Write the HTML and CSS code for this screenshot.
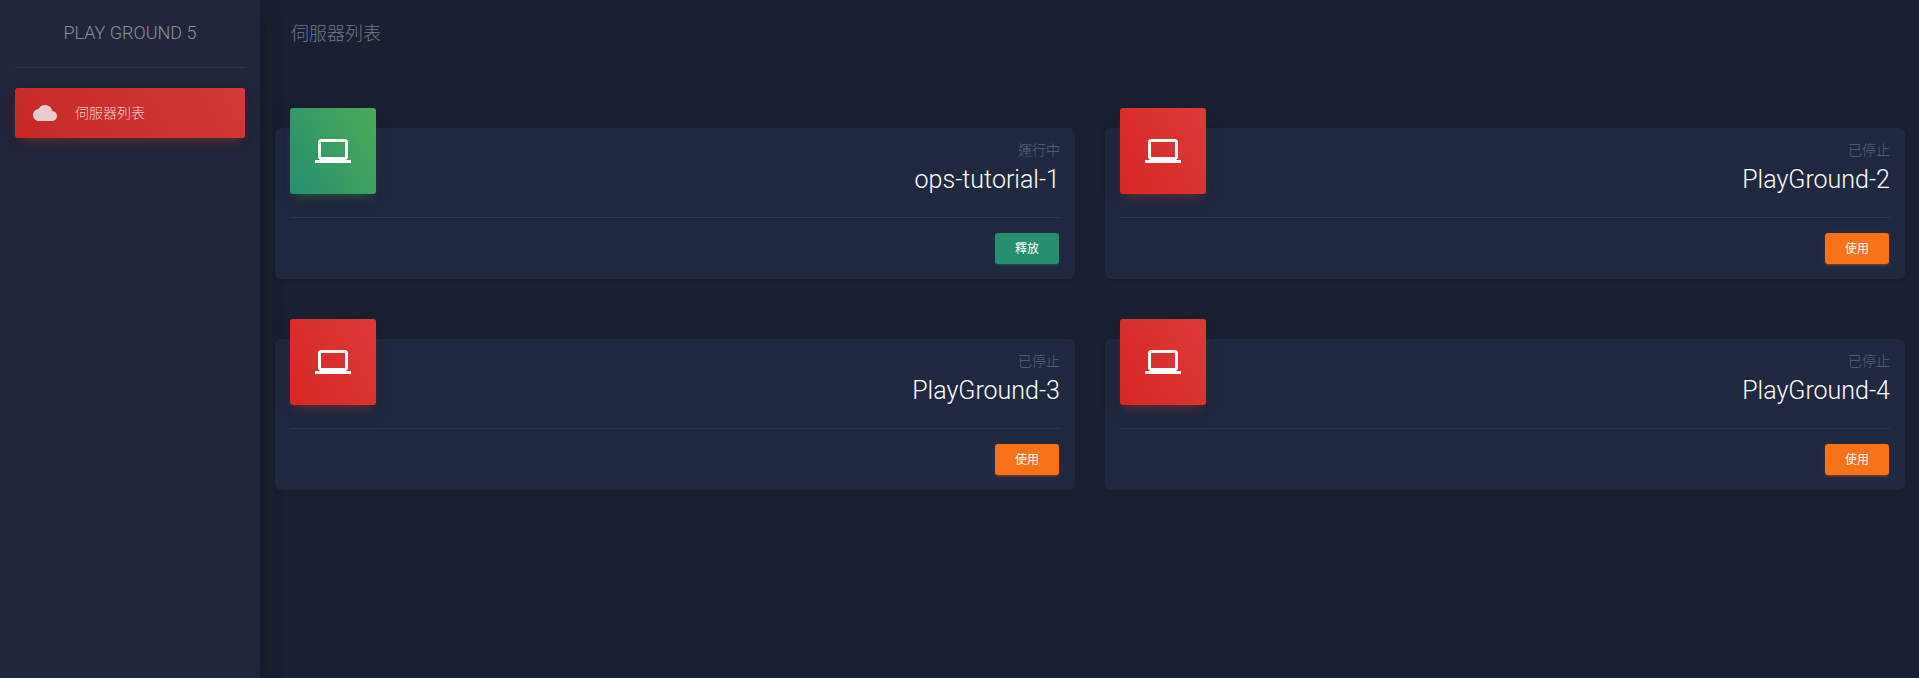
FILE: index.html
```html
<!DOCTYPE html>
<html lang="zh-Hant">
<head>
<meta charset="utf-8">
<title>PLAY GROUND 5</title>
<link rel="stylesheet" href="styles.css">
</head>
<body>
<svg class="sprite" aria-hidden="true">
  <symbol id="laptop" viewBox="0 0 24 24"><path d="M20 18c1.1 0 1.99-.9 1.99-2L22 6c0-1.1-.9-2-2-2H4c-1.1 0-2 .9-2 2v10c0 1.100.9 2 2 2H0v2h24v-2h-4zM4 6h16v10H4V6z"/></symbol>
  <symbol id="cloud" viewBox="0 0 24 24"><path d="M19.350 10.040C18.670 6.590 15.640 4 12 4 9.110 4 6.600 5.640 5.350 8.040 2.340 8.360 0 10.910 0 14c0 3.310 2.690 6 6 6h13c2.760 0 5-2.240 5-5 0-2.640-2.050-4.780-4.650-4.960z"/></symbol>
</svg>
<div class="wrapper">
  <aside class="sidebar">
    <div class="logo">PLAY GROUND 5</div>
    <nav><a class="nav-link"><svg class="nav-icon"><use href="#cloud"/></svg><span>伺服器列表</span></a></nav>
  </aside>
  <main class="main">
    <h1 class="page-title">伺服器列表</h1>
    <div class="servers">
      <section class="card">
        <div class="card-header"><div class="card-icon running"><svg><use href="#laptop"/></svg></div>
          <div class="info"><p class="status">運行中</p><h3 class="name">ops-tutorial-1</h3></div></div>
        <div class="card-footer"><button class="btn release">釋放</button></div>
      </section>
      <section class="card">
        <div class="card-header"><div class="card-icon"><svg><use href="#laptop"/></svg></div>
          <div class="info"><p class="status">已停止</p><h3 class="name">PlayGround-2</h3></div></div>
        <div class="card-footer"><button class="btn">使用</button></div>
      </section>
      <section class="card">
        <div class="card-header"><div class="card-icon"><svg><use href="#laptop"/></svg></div>
          <div class="info"><p class="status">已停止</p><h3 class="name">PlayGround-3</h3></div></div>
        <div class="card-footer"><button class="btn">使用</button></div>
      </section>
      <section class="card">
        <div class="card-header"><div class="card-icon"><svg><use href="#laptop"/></svg></div>
          <div class="info"><p class="status">已停止</p><h3 class="name">PlayGround-4</h3></div></div>
        <div class="card-footer"><button class="btn">使用</button></div>
      </section>
    </div>
  </main>
</div>
</body>
</html>
```
FILE: styles.css
```css
* { box-sizing: border-box; }
body {
  margin: 0;
  background: #1a2032;
  font-family: Roboto, "Noto Sans CJK TC", sans-serif;
  font-weight: 300;
  color: #8b909e;
}
.sprite { display: none; }
.wrapper { display: flex; height: 678px; overflow: hidden; }
.sidebar {
  flex: 0 0 260px;
  padding: 0 15px;
  background: #20263b;
  box-shadow: 0 10px 30px -12px rgba(0,0,0,.42), 0 4px 25px 0 rgba(0,0,0,.12), 0 8px 10px -5px rgba(0,0,0,.2);
}
.logo {
  height: 68px;
  padding-top: 18px;
  border-bottom: 1px solid #2e384e;
  text-align: center;
  font-size: 18px;
  line-height: 30px;
}
.nav-link {
  display: flex;
  align-items: center;
  height: 50px;
  margin-top: 20px;
  padding-left: 18px;
  gap: 18px;
  border-radius: 3px;
  background: linear-gradient(60deg, #c62828, #d03a37);
  box-shadow: 0 4px 20px 0 rgba(0,0,0,.14), 0 7px 10px -5px rgba(244,67,54,.4);
  color: rgba(255,255,255,.75);
  font-size: 14px;
}
.nav-link span { padding-bottom: 2px; }
.nav-icon { width: 24px; height: 24px; fill: #e8cbcc; }
.main { flex: 1; padding: 0 14px 0 15px; }
.page-title {
  margin: 0;
  padding: 19px 16px 0;
  height: 128px;
  font-size: 18px;
  font-weight: 300;
  line-height: 30px;
  color: #737889;
}
.servers { display: grid; grid-template-columns: 1fr 1fr; gap: 60px 30px; }
.card {
  height: 151px;
  padding: 0 15px;
  border-radius: 6px;
  background: #202840;
  box-shadow: 0 1px 4px 0 rgba(0,0,0,.14);
}
.card-header { display: flex; justify-content: space-between; height: 89px; }
.card-icon {
  display: grid;
  place-items: center;
  width: 86px;
  height: 86px;
  margin-top: -20px;
  border-radius: 3px;
  background: linear-gradient(60deg, #d62825, #dc3a37);
  box-shadow: 0 4px 20px 0 rgba(0,0,0,.14), 0 7px 10px -5px rgba(244,67,54,.4);
}
.card-icon.running {
  background: linear-gradient(60deg, #268f70, #4caa57);
  box-shadow: 0 4px 20px 0 rgba(0,0,0,.14), 0 7px 10px -5px rgba(76,175,80,.4);
}
.card-icon svg { width: 36px; height: 36px; fill: #fff; }
.info { padding-top: 12px; text-align: right; }
.status { margin: 0; font-size: 14px; line-height: 21px; color: #5e657d; }
.name { margin: 1px 0 0; font-size: 25px; font-weight: 300; line-height: 35px; color: #fff; }
.card-footer {
  display: flex;
  justify-content: flex-end;
  padding: 15px 1px 0 0;
  border-top: 1px solid #2d364a;
}
.btn {
  width: 64px;
  height: 31px;
  padding: 0;
  border: 0;
  border-radius: 3px;
  background: #f77219;
  box-shadow: 0 2px 2px 0 rgba(247,114,25,.14), 0 3px 1px -2px rgba(247,114,25,.2), 0 1px 5px 0 rgba(247,114,25,.12);
  color: #fff;
  font: 400 12px/18px Roboto, "Noto Sans CJK TC", sans-serif;
}
.btn.release {
  background: #268e6d;
  box-shadow: 0 2px 2px 0 rgba(38,142,109,.14), 0 3px 1px -2px rgba(38,142,109,.2), 0 1px 5px 0 rgba(38,142,109,.12);
}
```
